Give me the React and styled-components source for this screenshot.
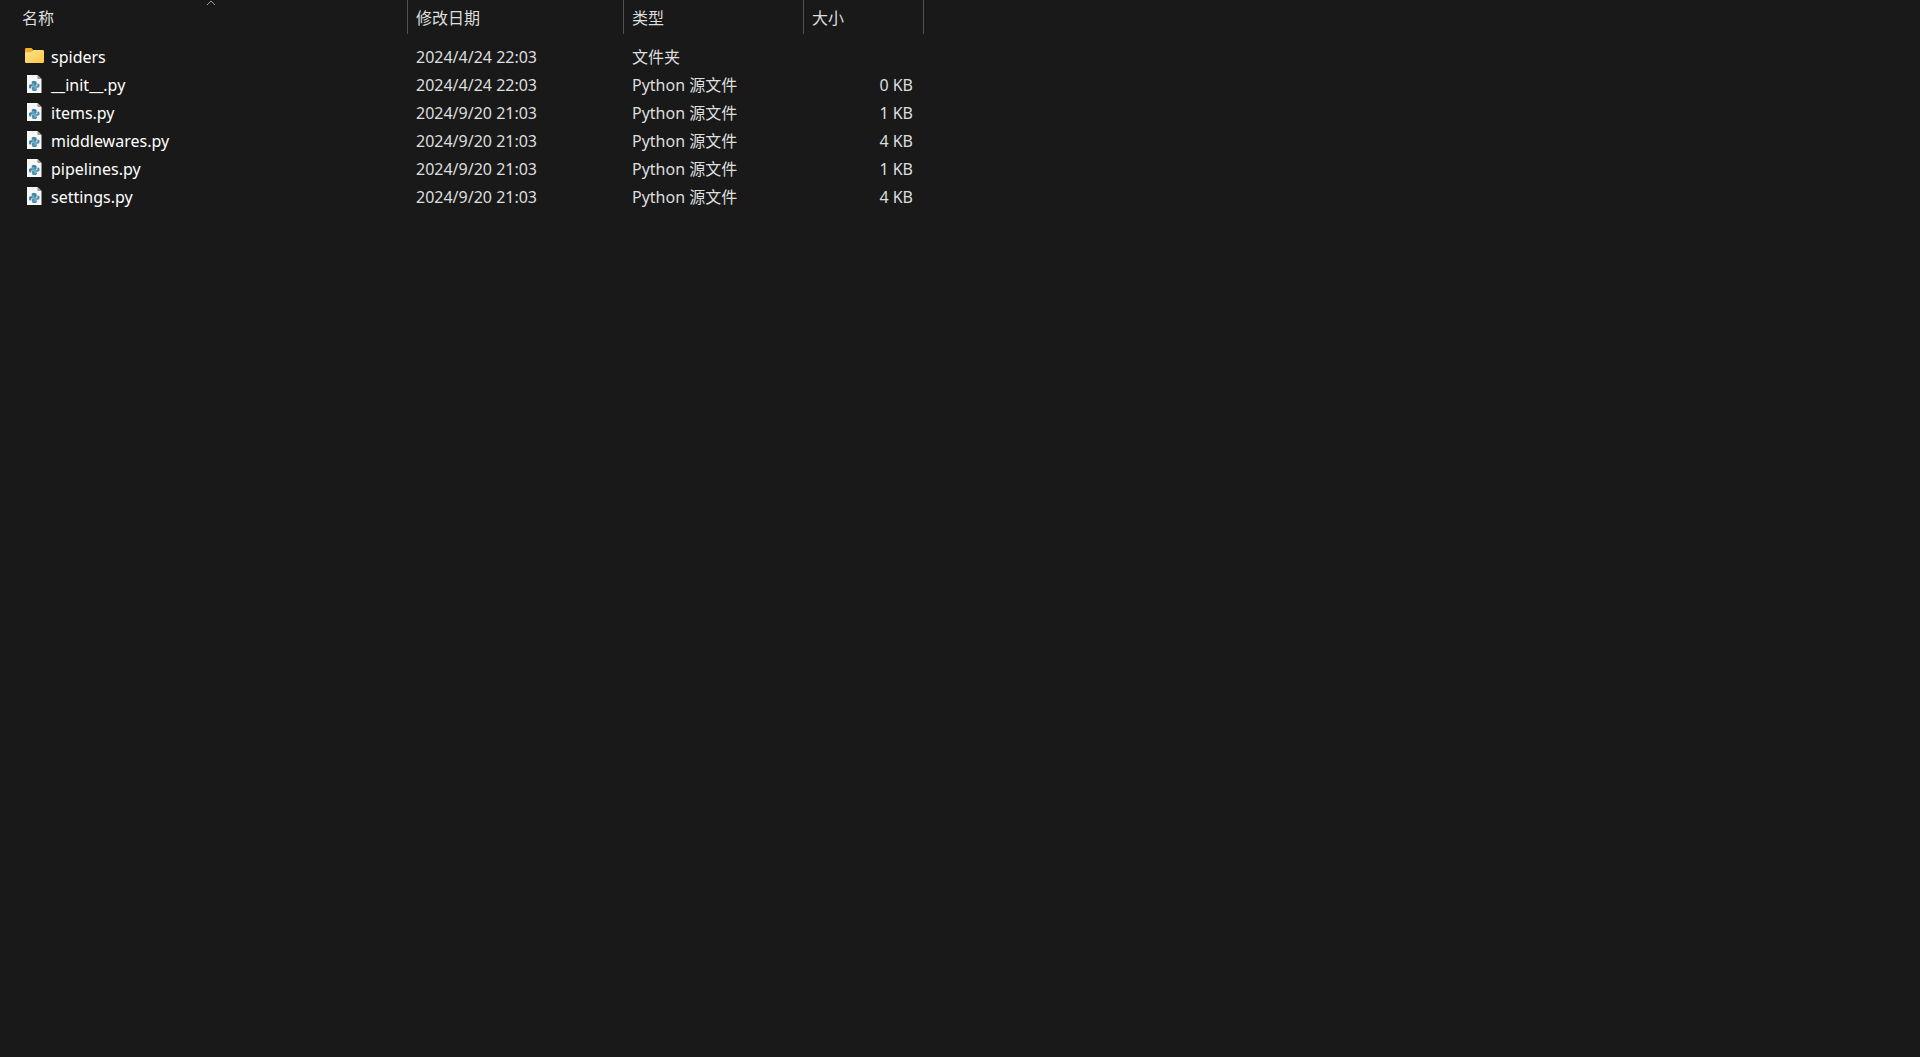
import styled, { createGlobalStyle } from "styled-components";

const GlobalStyle = createGlobalStyle`
  body {
    margin: 0;
    background-color: #191919;
  }
`;

const Container = styled.main`
  min-height: 100vh;
  overflow-x: auto;
  background-color: #191919;
  color: #dedede;
  font-family: "Noto Sans", "Noto Sans CJK SC", sans-serif;
  font-size: 16px;
  line-height: 28px;
`;

const Table = styled.table`
  table-layout: fixed;
  width: 924px;
  border-spacing: 0;
`;

const Column = styled.col`
  width: ${(props) => props.$width}px;
`;

const HeaderCell = styled.th`
  padding: 0 0 9px;
  font-weight: 400;
`;

const SortButton = styled.button`
  position: relative;
  display: block;
  width: 100%;
  height: 34px;
  padding: 2px 0 0 ${(props) => (props.$first ? 22 : 8)}px;
  border: none;
  border-right: 1px solid #535353;
  background: none;
  color: inherit;
  font: inherit;
  line-height: 32px;
  text-align: left;
  cursor: pointer;
`;

const SortArrow = styled.svg`
  position: absolute;
  top: 0;
  left: 206px;
  width: 10px;
  height: 6px;
`;

const Row = styled.tr`
  height: 28px;
`;

const Cell = styled.td`
  padding: 0 11px 0 8px;
  text-align: ${(props) => (props.$right ? "right" : "left")};
  white-space: nowrap;
`;

const NameCell = styled.td`
  padding: 0 8px 0 24px;
`;

const FileName = styled.div`
  display: flex;
  align-items: center;
  gap: 7px;
  color: #ffffff;
`;

const Icon = styled.svg`
  flex: none;
  width: 20px;
  height: 22px;
`;

const FolderIcon = () => (
  <Icon viewBox="0 0 20 22" aria-hidden="true">
    <defs>
      <linearGradient id="folder" x1="0" y1="0" x2="1" y2="1">
        <stop offset="0" stopColor="#ffe394" />
        <stop offset="1" stopColor="#fbc83f" />
      </linearGradient>
    </defs>
    <path d="M1 3.2Q1 2 2.2 2H7.500l1.500 1.500L7.300 7.500H1z" fill="#f0b02a" />
    <path
      d="M1 6.300h6L9 4H18.800q1.200 0 1.200 1.200v10.600q0 1.200-1.200 1.200H2.200Q1 17 1 15.800z"
      fill="url(#folder)"
    />
  </Icon>
);

const PythonIcon = () => (
  <Icon viewBox="0 0 20 22" aria-hidden="true">
    <path d="M3 1h10.500L17.500 5V19H3z" fill="#f7f7f7" />
    <path d="M13.500 1v4h4z" fill="#9c9c9c" />
    <g transform="translate(10.300 12) scale(.9) translate(-10.200 -12)">
      <path
        d="M9.800 6.500c-2 0-2.500.7-2.500 1.700v1.300h3v.6H6.200c-1.300 0-1.900 1-1.900 2.400s.6 2.400 1.700 2.400h.8v-1.400c0-1.200.8-1.900 1.900-1.900h2.600c.9 0 1.500-.6 1.500-1.400v-2c0-1.100-1-1.700-3-1.700z"
        fill="#3f83a5"
      />
      <path
        d="M10.600 17.500c2 0 2.500-.7 2.500-1.700v-1.300h-3v-.6h4.100c1.300 0 1.900-1 1.900-2.400s-.6-2.400-1.700-2.400h-.8v1.400c0 1.200-.8 1.900-1.900 1.900H9.100c-.9 0-1.500.6-1.500 1.400v2c0 1.100 1 1.700 3 1.700z"
        fill="#4a93b5"
      />
    </g>
  </Icon>
);

const columns = [
  { label: "名称", width: 408 },
  { label: "修改日期", width: 216 },
  { label: "类型", width: 180 },
  { label: "大小", width: 120 },
];

const files = [
  { name: "spiders", date: "2024/4/24 22:03", type: "文件夹", folder: true },
  { name: "__init__.py", date: "2024/4/24 22:03", type: "Python 源文件", size: "0 KB" },
  { name: "items.py", date: "2024/9/20 21:03", type: "Python 源文件", size: "1 KB" },
  { name: "middlewares.py", date: "2024/9/20 21:03", type: "Python 源文件", size: "4 KB" },
  { name: "pipelines.py", date: "2024/9/20 21:03", type: "Python 源文件", size: "1 KB" },
  { name: "settings.py", date: "2024/9/20 21:03", type: "Python 源文件", size: "4 KB" },
];

const App = () => {
  return (
    <Container lang="zh-CN">
      <GlobalStyle />
      <Table>
        <colgroup>
          {columns.map((column) => (
            <Column key={column.label} $width={column.width} />
          ))}
        </colgroup>
        <thead>
          <tr>
            {columns.map((column, index) => (
              <HeaderCell
                key={column.label}
                scope="col"
                aria-sort={index === 0 ? "ascending" : undefined}
              >
                <SortButton type="button" $first={index === 0}>
                  {column.label}
                  {index === 0 && (
                    <SortArrow viewBox="0 0 10 6" aria-hidden="true">
                      <path d="M1 5l4-4 4 4" fill="none" stroke="#a0a0a0" />
                    </SortArrow>
                  )}
                </SortButton>
              </HeaderCell>
            ))}
          </tr>
        </thead>
        <tbody>
          {files.map((file) => (
            <Row key={file.name}>
              <NameCell>
                <FileName>
                  {file.folder ? <FolderIcon /> : <PythonIcon />}
                  {file.name}
                </FileName>
              </NameCell>
              <Cell>{file.date}</Cell>
              <Cell>{file.type}</Cell>
              <Cell $right>{file.size}</Cell>
            </Row>
          ))}
        </tbody>
      </Table>
    </Container>
  );
};

export default App;
